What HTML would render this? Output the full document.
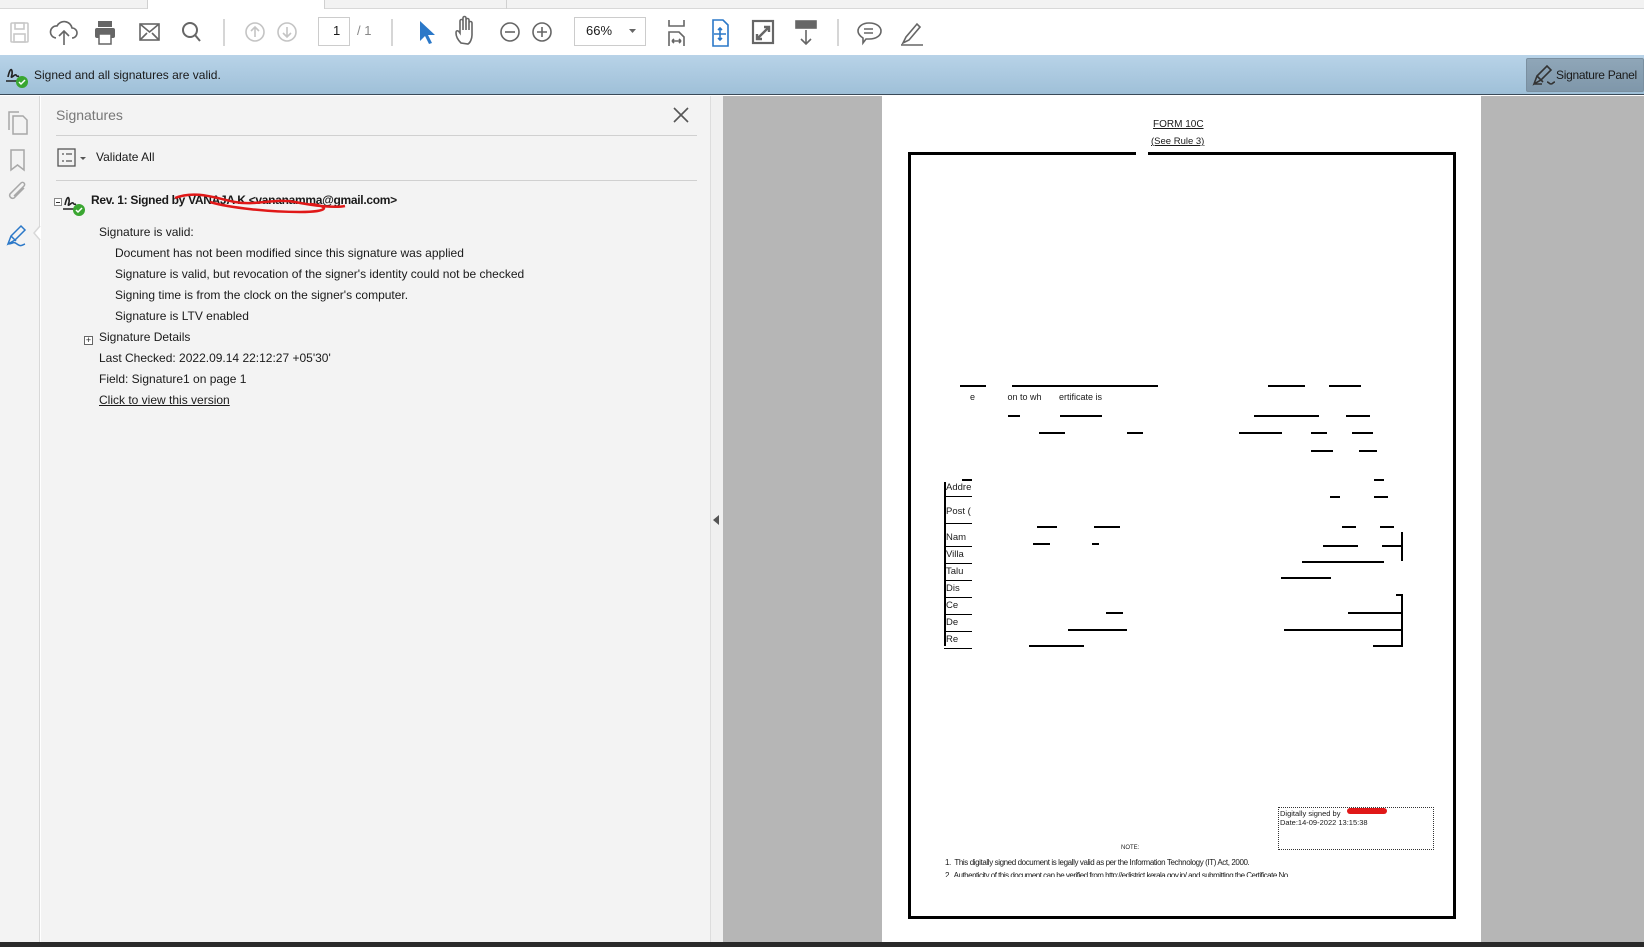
<!DOCTYPE html>
<html><head><meta charset="utf-8"><style>
*{margin:0;padding:0;box-sizing:border-box}
body{width:1644px;height:947px;overflow:hidden;position:relative;background:#fff;font-family:"Segoe UI","Liberation Sans",sans-serif;color:#1a1a1a}
.a{position:absolute}
.t{font-size:12px;white-space:nowrap}
.ln{position:absolute;height:1.5px;background:#000}
</style></head><body>
<!-- tab strip -->
<div class="a" style="left:0;top:0;width:1644px;height:9px;background:#f2f2f2;border-bottom:1px solid #d8d8d8"></div>
<div class="a" style="left:147px;top:0;width:178px;height:9px;background:#fff;border-left:1px solid #d0d0d0;border-right:1px solid #d0d0d0"></div>
<div class="a" style="left:506px;top:0;width:1px;height:9px;background:#d0d0d0"></div>
<!-- toolbar -->
<svg class="a" style="left:0;top:9px" width="1000" height="46" fill="none" stroke-width="1.6">
<g stroke="#c8c8c8"><rect x="11" y="14" width="17" height="19" rx="1"/><rect x="15" y="14" width="9" height="6"/><rect x="14" y="25" width="11" height="8"/></g>
<g stroke="#666"><path d="M56 29a6 6 0 0 1 1-12a8 8 0 0 1 15 2a5 5 0 0 1 0 10M64 36V22M59 27l5-5 5 5"/></g>
<g fill="#666" stroke="none"><rect x="98" y="12" width="14" height="6"/><rect x="95" y="19" width="20" height="10" rx="2"/><rect x="99" y="25" width="12" height="10" fill="#fff" stroke="#666" stroke-width="1.5"/></g>
<g stroke="#666"><rect x="140" y="15" width="19" height="16"/><path d="M140 15l9.5 8 9.5-8M140 31l7-7M159 31l-7-7"/></g>
<g stroke="#666" stroke-width="2"><circle cx="190" cy="21" r="7"/><path d="M195 26l5 6"/></g>
<path d="M224 10v27" stroke="#ccc"/>
<g stroke="#c4c4c4"><circle cx="255" cy="23" r="9"/><path d="M255 28v-10M251 22l4-4 4 4"/><circle cx="287" cy="23" r="9"/><path d="M287 18v10M283 24l4 4 4-4"/></g>
<rect x="318.5" y="8.5" width="31" height="28" stroke="#ccc" stroke-width="1"/>
<path d="M392 10v27" stroke="#ccc"/>
<path d="M420 12l0 20 5-5 4 8 3-1-4-8 7 0z" fill="#2b78c8" stroke="none"/>
<g stroke="#666"><path d="M461 34c-3-3-5-7-5-10s2-3 4 0v-12a1.5 1.5 0 0 1 3 0v9-12a1.5 1.5 0 0 1 3 0v12-10a1.5 1.5 0 0 1 3 0v10-7a1.5 1.5 0 0 1 3 0v12c0 4-2 8-4 9z"/></g>
<g stroke="#666"><circle cx="510" cy="23" r="9"/><path d="M505 23h10"/><circle cx="542" cy="23" r="9"/><path d="M537 23h10M542 18v10"/></g>
<rect x="574.5" y="8.5" width="71" height="28" stroke="#ccc" stroke-width="1"/>
<path d="M629 20h7l-3.5 4z" fill="#666" stroke="none"/>
<g stroke="#666"><path d="M669 11v6h15v-6M669 37v-14h10l5 5v9M672 32h9M672 32l2-2M672 32l2 2M681 32l-2-2M681 32l-2 2"/></g>
<g stroke="#2b78c8"><path d="M713 11h10l5 5v21h-15z"/><path d="M720 19v12M714 25h12M718 21l2-2 2 2M718 29l2 2 2-2"/></g>
<g stroke="#666"><rect x="753" y="12" width="20" height="22" stroke-width="2.2"/><path d="M757 30l12-12M764 18h5v5M757 25v5h5" stroke-width="2.4"/></g>
<g stroke="#666"><rect x="796" y="12" width="20" height="7" fill="#666"/><path d="M806 21v14M801 30l5 5 5-5"/></g>
<path d="M838 10v27" stroke="#ccc"/>
<g stroke="#666"><path d="M869 14c8 0 12 4 12 8s-4 8-12 8c-1 0-2 0-3 0l-3 4 0-5c-3-2-5-4-5-7 0-4 4-8 11-8zM864 20h9M864 24h9"/></g>
<g stroke="#666"><path d="M903 34l3-6 11-13 3 3-11 13zM901 36h22" /></g>
</svg>
<div class="a t" style="left:333px;top:23px;font-size:13px">1</div>
<div class="a t" style="left:357px;top:23px;font-size:13px;color:#888">/ 1</div>
<div class="a t" style="left:586px;top:23px;font-size:13px">66%</div>
<!-- blue bar -->
<div class="a" style="left:0;top:55px;width:1644px;height:40px;background:linear-gradient(#b8d3e8,#9fc0d8);border-bottom:1.5px solid #3a4a58"></div>
<svg class="a" style="left:4px;top:61px" width="26" height="28"><path d="M2 20h16M4 16c1-5 3-10 4-6s-2 7 0 6 3-3 4-2 1 2 3 1" stroke="#222" stroke-width="1.6" fill="none"/><circle cx="18" cy="21" r="6" fill="#3aa631"/><path d="M15 21l2 2 4-4" stroke="#fff" stroke-width="1.5" fill="none"/></svg>
<div class="a t" style="left:34px;top:68px;font-size:12px">Signed and all signatures are valid.</div>
<div class="a" style="left:1526px;top:58px;width:118px;height:34px;background:linear-gradient(#8fa6b8,#7f97aa);border:1px solid #7a8fa0;border-radius:2px"></div>
<svg class="a" style="left:1531px;top:62px" width="28" height="26"><path d="M3 22l3-8 10-10 4 4-10 10zM6 14l6 6M3 22h8M16 20c2 0 2 2 4 2s2-2 4-2" stroke="#333" stroke-width="1.6" fill="none"/></svg>
<div class="a t" style="left:1556px;top:68px;font-size:12px;letter-spacing:-0.3px">Signature Panel</div>
<!-- left strip -->
<div class="a" style="left:0;top:96px;width:40px;height:846px;background:#f3f3f3;border-right:1px solid #d8d8d8"></div>
<svg class="a" style="left:0;top:96px" width="50" height="160" fill="none" stroke="#a8a8a8" stroke-width="1.5">
<path d="M13 20h10l4 4v14H13zM9 34V16h10"/>
<path d="M11 54h13v20l-6.5-5-6.5 5z"/>
<path d="M24 92l-10 10a3 3 0 0 1-4-4l11-11a2 2 0 0 1 3 3l-10 10"/>
<path d="M8 148l3-8 10-10 4 4-10 10zM11 140l5 5M8 148c5 0 5-3 9 0s5 1 8 0" stroke="#2b78c8"/>
<path d="M40 130l-6 7 6 7" stroke="#d8d8d8" fill="#fff"/>
</svg>
<!-- signatures panel -->
<div class="a" style="left:41px;top:96px;width:669px;height:846px;background:#f3f3f3"></div>
<div class="a t" style="left:56px;top:107px;font-size:14px;color:#777">Signatures</div>
<svg class="a" style="left:672px;top:106px" width="18" height="18"><path d="M2 2l14 14M16 2L2 16" stroke="#555" stroke-width="1.6"/></svg>
<div class="a" style="left:56px;top:135px;width:641px;height:1px;background:#d0d0d0"></div>
<svg class="a" style="left:57px;top:148px" width="32" height="20" fill="none" stroke="#555" stroke-width="1.3"><rect x="1" y="1" width="17" height="17"/><path d="M5 6h2M9 6h6M5 13h2M9 13h6"/><path d="M23 9h6l-3 3z" fill="#555" stroke="none"/></svg>
<div class="a t" style="left:96px;top:150px;font-size:12px">Validate All</div>
<div class="a" style="left:56px;top:180px;width:641px;height:1px;background:#d0d0d0"></div>
<div class="a" style="left:54px;top:198px;width:8px;height:8px;border:1px solid #888;background:#fff"></div>
<div class="a" style="left:56px;top:202px;width:4px;height:1px;background:#333"></div>
<svg class="a" style="left:61px;top:189px" width="28" height="28"><path d="M2 20h16M4 16c1-5 3-10 4-6s-2 7 0 6 3-3 4-2 1 2 3 1" stroke="#222" stroke-width="1.6" fill="none"/><circle cx="18" cy="21" r="6" fill="#3aa631"/><path d="M15 21l2 2 4-4" stroke="#fff" stroke-width="1.5" fill="none"/></svg>
<div class="a t" style="left:91px;top:193px;font-size:12px;font-weight:bold;letter-spacing:-0.3px">Rev. 1: Signed by VANAJA K &lt;vananamma@gmail.com&gt;</div>
<svg class="a" style="left:170px;top:188px" width="180" height="30"><path d="M5 10c20-8 40 0 60 4s40-4 60 0 40 6 50 4M40 14c20 6 60 10 90 10s30-6 10-8" stroke="#e01818" stroke-width="2.5" fill="none"/></svg>
<div class="a t" style="left:99px;top:225px">Signature is valid:</div>
<div class="a t" style="left:115px;top:246px">Document has not been modified since this signature was applied</div>
<div class="a t" style="left:115px;top:267px">Signature is valid, but revocation of the signer's identity could not be checked</div>
<div class="a t" style="left:115px;top:288px">Signing time is from the clock on the signer's computer.</div>
<div class="a t" style="left:115px;top:309px">Signature is LTV enabled</div>
<div class="a" style="left:84px;top:336px;width:9px;height:9px;border:1px solid #666;background:#fff;font-size:9px;line-height:7px;text-align:center">+</div>
<div class="a t" style="left:99px;top:330px">Signature Details</div>
<div class="a t" style="left:99px;top:351px">Last Checked: 2022.09.14 22:12:27 +05'30'</div>
<div class="a t" style="left:99px;top:372px">Field: Signature1 on page 1</div>
<div class="a t" style="left:99px;top:393px;text-decoration:underline">Click to view this version</div>
<!-- splitter -->
<div class="a" style="left:710px;top:96px;width:13px;height:846px;background:#f0f0f0;border-left:1px solid #ddd"></div>
<div class="a" style="left:713px;top:515px;width:0;height:0;border-top:5px solid transparent;border-bottom:5px solid transparent;border-right:6px solid #555"></div>
<!-- doc area -->
<div class="a" style="left:723px;top:96px;width:921px;height:846px;background:#b6b6b6"></div>
<div class="a" style="left:882px;top:96px;width:599px;height:846px;background:#fff"></div>
<div class="a" style="left:0;top:942px;width:1644px;height:5px;background:#2a2a2a"></div>
<div class="a" style="left:1153px;top:119px;font-size:10px;text-decoration:underline;font-family:'Liberation Sans',sans-serif">FORM 10C</div>
<div class="a" style="left:1151px;top:136px;font-size:9.5px;text-decoration:underline;font-family:'Liberation Sans',sans-serif">(See Rule 3)</div>
<div class="a" style="left:908px;top:152px;width:548px;height:767px;border:3px solid #000"></div>
<div class="a" style="left:1136px;top:150px;width:12px;height:6px;background:#fff"></div>
<div class="a" style="left:970px;top:392px;font-size:9px;font-family:'Liberation Sans',sans-serif">e &nbsp; &nbsp; &nbsp; &nbsp; &nbsp; &nbsp; on to wh &nbsp; &nbsp; &nbsp; ertificate is</div>
<div class="ln" style="left:960px;top:385px;width:26px"></div><div class="ln" style="left:1012px;top:385px;width:146px"></div>
<div class="ln" style="left:1268px;top:385px;width:37px"></div><div class="ln" style="left:1329px;top:385px;width:32px"></div>
<div class="ln" style="left:1008px;top:415px;width:12px"></div><div class="ln" style="left:1060px;top:415px;width:42px"></div>
<div class="ln" style="left:1254px;top:415px;width:65px"></div><div class="ln" style="left:1346px;top:415px;width:24px"></div>
<div class="ln" style="left:1039px;top:432px;width:26px"></div><div class="ln" style="left:1127px;top:432px;width:16px"></div>
<div class="ln" style="left:1239px;top:432px;width:43px"></div><div class="ln" style="left:1311px;top:432px;width:16px"></div><div class="ln" style="left:1352px;top:432px;width:21px"></div>
<div class="ln" style="left:1311px;top:450px;width:22px"></div><div class="ln" style="left:1359px;top:450px;width:18px"></div>
<div class="ln" style="left:962px;top:479px;width:10px"></div><div class="ln" style="left:1374px;top:479px;width:10px"></div>
<div class="ln" style="left:1330px;top:496px;width:10px"></div><div class="ln" style="left:1374px;top:496px;width:14px"></div>
<div class="ln" style="left:1037px;top:526px;width:20px"></div><div class="ln" style="left:1094px;top:526px;width:26px"></div>
<div class="ln" style="left:1342px;top:526px;width:14px"></div><div class="ln" style="left:1380px;top:526px;width:14px"></div>
<div class="ln" style="left:1033px;top:543px;width:17px"></div><div class="ln" style="left:1092px;top:543px;width:7px"></div>
<div class="ln" style="left:1323px;top:545px;width:35px"></div><div class="ln" style="left:1382px;top:545px;width:20px"></div>
<div class="ln" style="left:1302px;top:561px;width:82px"></div><div class="ln" style="left:1281px;top:577px;width:50px"></div>
<div class="a" style="left:1401px;top:532px;width:1.5px;height:29px;background:#000"></div>
<div class="ln" style="left:1396px;top:594px;width:7px"></div>
<div class="ln" style="left:1348px;top:612px;width:55px"></div><div class="ln" style="left:1284px;top:629px;width:119px"></div><div class="ln" style="left:1373px;top:645px;width:30px"></div>
<div class="ln" style="left:1106px;top:612px;width:17px"></div><div class="ln" style="left:1068px;top:629px;width:59px"></div><div class="ln" style="left:1029px;top:645px;width:55px"></div>
<div class="a" style="left:1401px;top:594px;width:1.5px;height:52px;background:#000"></div>
<div class="a" style="left:944px;top:482px;width:1.5px;height:164px;background:#000"></div>
<div class="a" style="left:944px;top:480px;font-size:9.5px;line-height:16.5px;font-family:'Liberation Sans',sans-serif;width:28px;overflow:hidden">
<div style="padding-left:2px;border-bottom:1px solid #000;height:17px">Addre</div>
<div style="padding-left:2px;border-bottom:1px solid #000;height:27px;line-height:30px">Post (</div>
<div style="padding-left:2px;border-bottom:1px solid #000;height:17px;margin-top:6px">Nam</div>
<div style="padding-left:2px;border-bottom:1px solid #000;height:17px">Villa</div>
<div style="padding-left:2px;border-bottom:1px solid #000;height:17px">Talu</div>
<div style="padding-left:2px;border-bottom:1px solid #000;height:17px">Dis</div>
<div style="padding-left:2px;border-bottom:1px solid #000;height:17px">Ce</div>
<div style="padding-left:2px;border-bottom:1px solid #000;height:17px">De</div>
<div style="padding-left:2px;border-bottom:1px solid #000;height:17px">Re</div></div>
<div class="a" style="left:1278px;top:807px;width:156px;height:43px;border:1px dotted #333"></div>
<div class="a" style="left:1280px;top:809px;font-size:7.5px;line-height:9px;font-family:'Liberation Sans',sans-serif">Digitally signed by<br>Date:14-09-2022 13:15:38</div>
<div class="a" style="left:1347px;top:808px;width:40px;height:6px;background:#e01818;border-radius:3px"></div>
<div class="a" style="left:1121px;top:845px;font-size:6px;font-family:'Liberation Sans',sans-serif">NOTE:</div>
<div class="a" style="left:945px;top:858px;font-size:8px;letter-spacing:-0.4px;font-family:'Liberation Sans',sans-serif">1.&nbsp; This digitally signed document is legally valid as per the Information Technology (IT) Act, 2000.</div>
<div class="a" style="left:945px;top:872px;width:420px;height:5px;overflow:hidden;font-size:8px;letter-spacing:-0.5px;font-family:'Liberation Sans',sans-serif;line-height:8px">2.&nbsp; Authenticity of this document can be verified from http://edistrict.kerala.gov.in/ and submitting the Certificate No</div>
</body></html>
